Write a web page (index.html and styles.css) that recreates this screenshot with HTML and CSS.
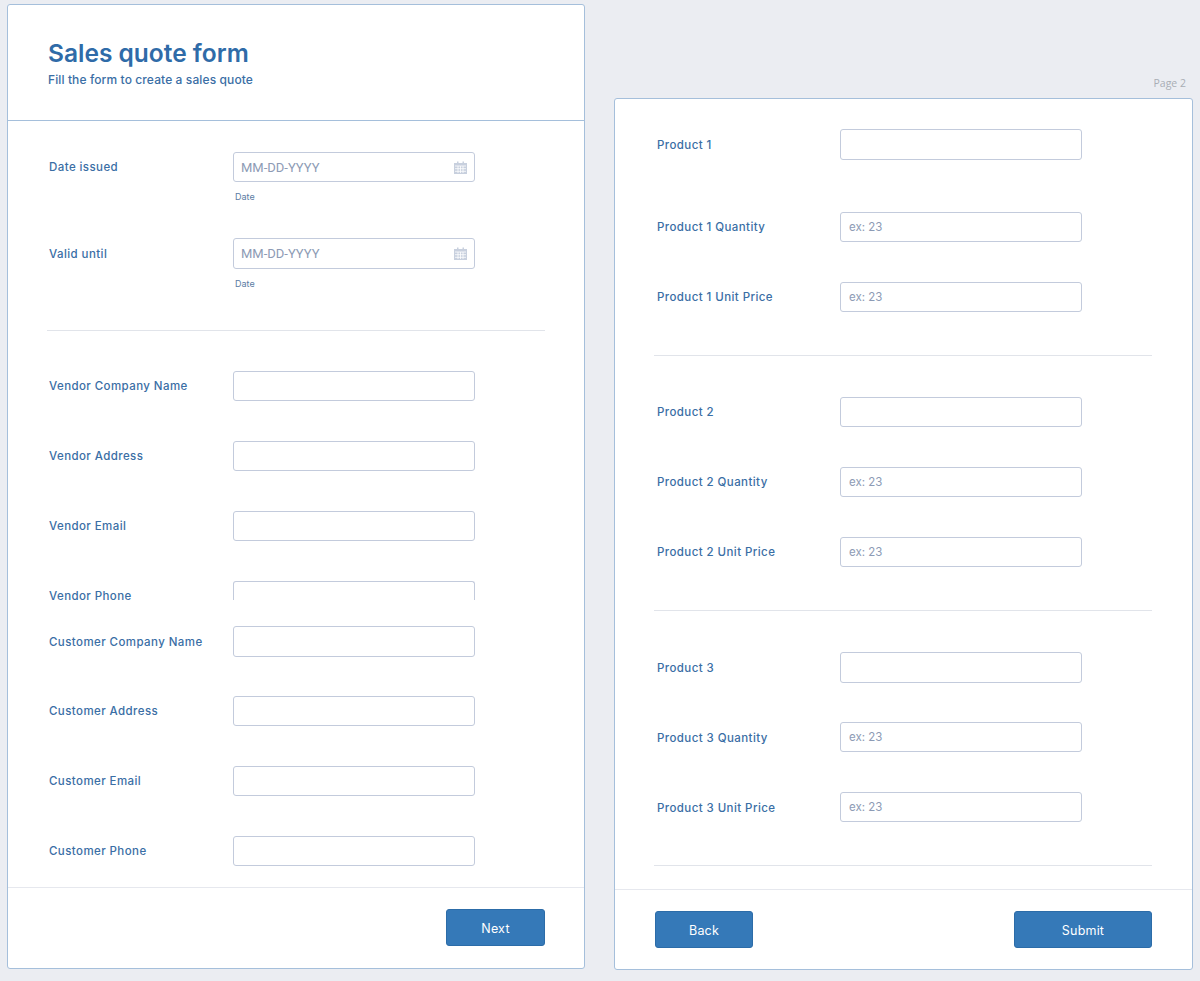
FILE: index.html
```html
<!DOCTYPE html>
<html lang="en">

<head>
  <meta charset="UTF-8">
  <title>Sales quote form</title>
  <link rel="stylesheet" href="styles.css">
</head>

<body>
  <div class="pages">
    <!-- page 1 -->
    <form class="card card-first">
      <header class="form-head">
        <h1>Sales quote form</h1>
        <p>Fill the form to create a sales quote</p>
      </header>

      <section class="dates">
        <div class="field date-field">
          <label>Date issued</label>
          <div class="control">
            <div class="input date-input">
              <span class="placeholder">MM-DD-YYYY</span>
              <svg class="cal" viewBox="0 0 13 13" width="13" height="13">
                <path d="M3 0.5h1.5v1.5h4V0.5H10v1.5h3V13H0V2h3z" fill="#c8d0de" />
                <path d="M1 5h11M1 7.7h11M1 10.3h11M4 5v7M6.5 5v7M9 5v7" stroke="#fff" stroke-width="0.8" fill="none" />
              </svg>
            </div>
            <small>Date</small>
          </div>
        </div>
        <div class="field date-field field-big">
          <label>Valid until</label>
          <div class="control">
            <div class="input date-input">
              <span class="placeholder">MM-DD-YYYY</span>
              <svg class="cal" viewBox="0 0 13 13" width="13" height="13">
                <path d="M3 0.5h1.5v1.5h4V0.5H10v1.5h3V13H0V2h3z" fill="#c8d0de" />
                <path d="M1 5h11M1 7.7h11M1 10.3h11M4 5v7M6.5 5v7M9 5v7" stroke="#fff" stroke-width="0.8" fill="none" />
              </svg>
            </div>
            <small>Date</small>
          </div>
        </div>
      </section>

      <hr class="divider">

      <section class="vendor">
        <div class="field"><label>Vendor Company Name</label>
          <div class="input"></div>
        </div>
        <div class="field"><label>Vendor Address</label>
          <div class="input"></div>
        </div>
        <div class="field"><label>Vendor Email</label>
          <div class="input"></div>
        </div>
        <!-- cut by the page break -->
        <div class="field field-cut"><label>Vendor Phone</label>
          <div class="input"></div>
        </div>
      </section>

      <section class="customer">
        <div class="field field-big"><label>Customer Company Name</label>
          <div class="input"></div>
        </div>
        <div class="field"><label>Customer Address</label>
          <div class="input"></div>
        </div>
        <div class="field"><label>Customer Email</label>
          <div class="input"></div>
        </div>
        <div class="field"><label>Customer Phone</label>
          <div class="input"></div>
        </div>
      </section>

      <footer class="form-foot foot-end">
        <button type="button" class="btn btn-next">Next</button>
      </footer>
    </form>

    <!-- page 2 -->
    <div class="second">
      <div class="page-label">Page 2</div>
      <form class="card card-second">
        <section class="products">
          <div class="field field-big field-tall"><label>Product 1</label>
            <div class="input"></div>
          </div>
          <div class="field"><label>Product 1 Quantity</label>
            <div class="input"><span class="placeholder small">ex: 23</span></div>
          </div>
          <div class="field"><label>Product 1 Unit Price</label>
            <div class="input"><span class="placeholder small">ex: 23</span></div>
          </div>
        </section>
        <hr class="divider">
        <section class="products">
          <div class="field"><label>Product 2</label>
            <div class="input"></div>
          </div>
          <div class="field"><label>Product 2 Quantity</label>
            <div class="input"><span class="placeholder small">ex: 23</span></div>
          </div>
          <div class="field"><label>Product 2 Unit Price</label>
            <div class="input"><span class="placeholder small">ex: 23</span></div>
          </div>
        </section>
        <hr class="divider">
        <section class="products">
          <div class="field field-big"><label>Product 3</label>
            <div class="input"></div>
          </div>
          <div class="field field-low"><label>Product 3 Quantity</label>
            <div class="input"><span class="placeholder small">ex: 23</span></div>
          </div>
          <div class="field field-low"><label>Product 3 Unit Price</label>
            <div class="input"><span class="placeholder small">ex: 23</span></div>
          </div>
        </section>
        <hr class="divider">
        <footer class="form-foot foot-between">
          <button type="button" class="btn btn-back">Back</button>
          <button type="button" class="btn btn-submit">Submit</button>
        </footer>
      </form>
    </div>
  </div>
</body>

</html>
```

FILE: styles.css
```css
body {
  margin: 0;
  background-color: #ebedf2;
  font-family: Inter, "Liberation Sans", sans-serif;
  color: #3a6ea5;
}

.pages {
  display: flex;
  align-items: flex-start;
  gap: 29px;
  padding: 4px 0 0 7px;
}

.card {
  box-sizing: border-box;
  background-color: #fff;
  border: 1px solid #a5bfdb;
  border-radius: 3px;
}

.card-first {
  width: 578px;
  height: 965px;
}

.card-second {
  width: 579px;
  height: 872px;
  padding-top: 30px;
}

.form-head {
  height: 116px;
  box-sizing: border-box;
  padding: 34px 0 0 40px;
  border-bottom: 1px solid #a5bfdb;
}

h1 {
  margin: 0;
  font-size: 24.5px;
  line-height: 29px;
  font-weight: 600;
  color: #2f6ba8;
}

.form-head p {
  margin: 4px 0 0;
  font-size: 12px;
  line-height: 15px;
  font-weight: 500;
  letter-spacing: 0.11px;
}

.field {
  display: flex;
  align-items: flex-start;
  padding-left: 41px;
  height: 70px;
}

.card-second .field {
  padding-left: 42px;
}

.field label {
  width: 184px;
  flex: none;
  font-size: 11.5px;
  line-height: 31px;
  font-weight: 500;
  letter-spacing: 0.42px;
}

.card-second .field label {
  width: 183px;
}

.field-big label,
.field-low label {
  line-height: 33px;
}

.field-tall {
  height: 83px;
}

.field-cut {
  height: 19px;
}

.input {
  box-sizing: border-box;
  width: 242px;
  height: 30px;
  flex: none;
  background-color: #fff;
  border: 1px solid #c3cbdc;
  border-radius: 3px;
  display: flex;
  align-items: center;
  justify-content: space-between;
  padding: 0 7px;
}

.field-big .input {
  height: 31px;
}

.field-cut .input {
  height: 19px;
  border-bottom: 0;
  border-radius: 3px 3px 0 0;
}

.placeholder {
  font-family: Roboto, sans-serif;
  font-size: 13px;
  color: #8d9bb5;
}

.placeholder.small {
  font-family: Inter, sans-serif;
  font-size: 11.5px;
  margin-left: 1px;
}

.cal {
  display: block;
}

.dates {
  padding: 31px 0 6px;
}

.date-field {
  height: 86px;
}

.control small {
  display: block;
  margin: 9px 0 0 2px;
  font-size: 9px;
  line-height: 11px;
  color: #5b7ca3;
}

.divider {
  margin: 0 39px;
  border: 0;
  border-top: 1px solid #e1e4ea;
}

.card-second .divider {
  margin-right: 40px;
}

.vendor {
  margin-top: 40px;
}

.customer {
  margin-top: 26px;
}

.customer .field:last-child {
  height: 51px;
}

.form-foot {
  display: flex;
  border-top: 1px solid #e6e8ee;
  padding: 21px 39px 0 40px;
}

.foot-end {
  justify-content: flex-end;
}

.foot-between {
  justify-content: space-between;
  margin-top: 23px;
  padding-right: 40px;
}

.btn {
  box-sizing: border-box;
  height: 37px;
  padding: 1px 0 0;
  background-color: #3579b8;
  border: 1px solid #2c6ca8;
  border-radius: 3px;
  color: #fff;
  font-family: inherit;
  font-size: 12.5px;
  font-weight: 400;
  letter-spacing: 0.2px;
}

.btn-next {
  width: 99px;
}

.btn-back {
  width: 98px;
}

.btn-submit {
  width: 138px;
}

.card-second .products+.divider {
  margin-top: 3px;
}

.card-second .divider+.products {
  margin-top: 41px;
}

.page-label {
  height: 94px;
  box-sizing: border-box;
  padding: 72px 7px 0 0;
  text-align: right;
  font-family: "Open Sans", sans-serif;
  font-size: 10.5px;
  line-height: 14px;
  color: #a9adb5;
}
```
